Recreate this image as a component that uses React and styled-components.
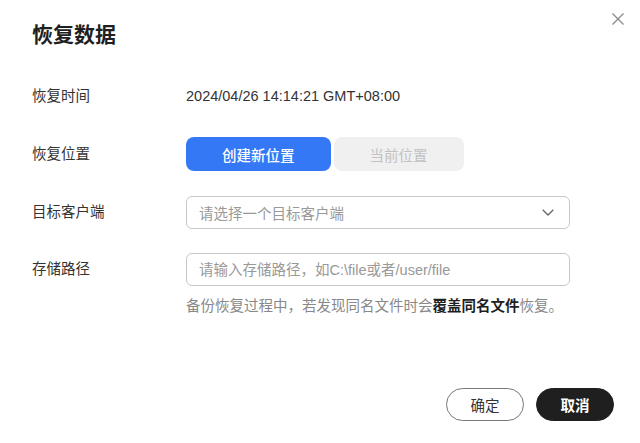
import styled, { createGlobalStyle } from "styled-components"

const GlobalStyle = createGlobalStyle`
    * { box-sizing: border-box; }
    html, body { margin: 0; padding: 0; background: #fff; }
    body {
        font-family: "Liberation Sans", "Noto Sans CJK SC", sans-serif;
        color: #333;
    }
`

export default function App() {
    return (
        <>
            <GlobalStyle />
            <Dialog>
                <Close aria-label="close">
                    <svg width="12" height="12" viewBox="0 0 12 12">
                        <path d="M0.5 0.5 L11.5 11.5 M11.5 0.5 L0.5 11.5" stroke="#8a8a8a" strokeWidth="1.3" fill="none" />
                    </svg>
                </Close>
                <Title>恢复数据</Title>

                <Form>
                    <Row>
                        <Label>恢复时间</Label>
                        <Value>2024/04/26 14:14:21 GMT+08:00</Value>
                    </Row>
                    <Row>
                        <Label>恢复位置</Label>
                        <Segment>
                            <SegButton $active>创建新位置</SegButton>
                            <SegButton>当前位置</SegButton>
                        </Segment>
                    </Row>
                    <Row>
                        <Label>目标客户端</Label>
                        <Select>
                            <Placeholder>请选择一个目标客户端</Placeholder>
                            <svg width="12" height="7" viewBox="0 0 12 7">
                                <path d="M0.7 0.7 L6 6 L11.3 0.7" stroke="#666" strokeWidth="1.3" fill="none" />
                            </svg>
                        </Select>
                    </Row>
                    <Row $top>
                        <Label $tall>存储路径</Label>
                        <Field>
                            <Input placeholder="请输入存储路径，如C:\file或者/user/file" />
                            <Hint>备份恢复过程中，若发现同名文件时会<strong>覆盖同名文件</strong>恢复。</Hint>
                        </Field>
                    </Row>
                </Form>

                <Footer>
                    <PillButton>确定</PillButton>
                    <PillButton $dark>取消</PillButton>
                </Footer>
            </Dialog>
        </>
    )
}

const Dialog = styled.div`
    position: relative;
    height: 443px;
    display: flex;
    flex-direction: column;
    padding: 20px 26px 22px 32px;
`
const Close = styled.button`
    position: absolute;
    top: 13px;
    right: 16px;
    width: 12px;
    height: 12px;
    padding: 0;
    border: none;
    background: none;
    display: flex;
    cursor: pointer;
`
const Title = styled.h1`
    margin: 0;
    font-size: 21px;
    line-height: 30px;
    font-weight: 700;
    color: #1f1f1f;
`
const Form = styled.div`
    margin-top: 29px;
    display: flex;
    flex-direction: column;
    gap: 24px;
`
const Row = styled.div`
    display: grid;
    grid-template-columns: 154px 384px;
    align-items: ${p => (p.$top ? "start" : "center")};
    min-height: 34px;
`
const Label = styled.div`
    font-size: 14.5px;
    line-height: ${p => (p.$tall ? "33px" : "20px")};
    color: #333;
`
const Value = styled.div`
    font-size: 14.5px;
    color: #333;
`
const Segment = styled.div`
    display: flex;
    gap: 3px;
`
const SegButton = styled.button`
    height: 34px;
    padding: 0 36px;
    border: none;
    border-radius: 8px;
    font-family: inherit;
    font-size: 14.5px;
    font-weight: ${p => (p.$active ? 500 : 400)};
    background: ${p => (p.$active ? "#3478f6" : "#f0f0f0")};
    color: ${p => (p.$active ? "#fff" : "#c2c2c2")};
`
const Select = styled.div`
    height: 33px;
    border: 1px solid #c8c8c8;
    border-radius: 6px;
    padding: 0 15px 0 12px;
    display: flex;
    align-items: center;
    justify-content: space-between;
`
const Placeholder = styled.span`
    font-size: 14.5px;
    color: #999;
`
const Field = styled.div`
    display: flex;
    flex-direction: column;
`
const Input = styled.input`
    height: 33px;
    border: 1px solid #c8c8c8;
    border-radius: 6px;
    padding: 0 12px;
    font-family: inherit;
    font-size: 14.5px;
    outline: none;
    &::placeholder { color: #999; }
`
const Hint = styled.p`
    margin: 10px 0 0;
    font-size: 14.5px;
    line-height: 20px;
    color: #888;
    strong { color: #1f1f1f; font-weight: 700; }
`
const Footer = styled.div`
    margin-top: auto;
    display: flex;
    justify-content: flex-end;
    gap: 12px;
`
const PillButton = styled.button`
    height: 33px;
    min-width: 78px;
    padding: 0 22px;
    border-radius: 17px;
    font-family: inherit;
    font-size: 14.5px;
    border: 1px solid ${p => (p.$dark ? "#1f1f1f" : "#777")};
    background: ${p => (p.$dark ? "#1f1f1f" : "#fff")};
    color: ${p => (p.$dark ? "#fff" : "#333")};
    font-weight: ${p => (p.$dark ? 700 : 400)};
`
